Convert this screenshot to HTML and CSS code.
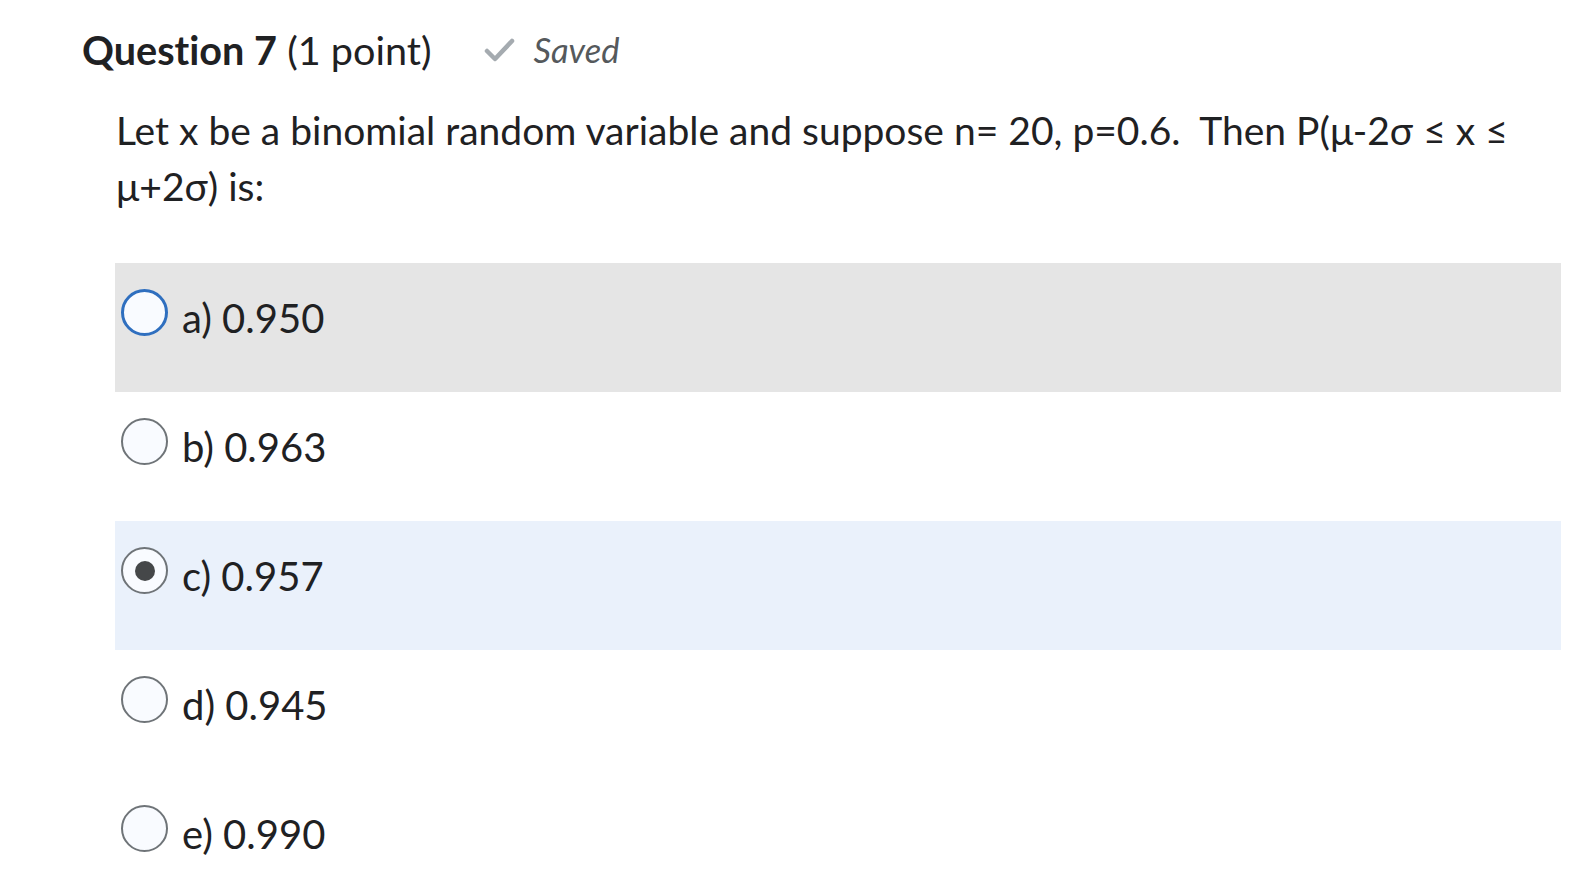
FILE: index.html
```html
<!DOCTYPE html>
<html>
<head>
<meta charset="utf-8">
<link rel="stylesheet" href="styles.css">
</head>
<body>
<div class="page">
  <div class="header">
    <h2 class="title"><span class="qnum">Question 7</span> <span class="pts">(1 point)</span></h2>
    <div class="saved">
      <svg class="check" width="32" height="26" viewBox="0 0 32 26"><path d="M3 14 L11 22 L28 4" fill="none" stroke="#a5abb0" stroke-width="4.5" stroke-linecap="round" stroke-linejoin="round"/></svg>
      <span class="saved-text">Saved</span>
    </div>
  </div>
  <p class="question">Let x be a binomial random variable and suppose n= 20, p=0.6.&nbsp; Then P(μ-2σ ≤ x ≤ μ+2σ) is:</p>
  <div class="options">
    <div class="option hover"><span class="radio focus"></span><span class="label">a) 0.950</span></div>
    <div class="option"><span class="radio"></span><span class="label">b) 0.963</span></div>
    <div class="option selected"><span class="radio checked"></span><span class="label">c) 0.957</span></div>
    <div class="option"><span class="radio"></span><span class="label">d) 0.945</span></div>
    <div class="option"><span class="radio"></span><span class="label">e) 0.990</span></div>
  </div>
</div>
</body>
</html>
```
FILE: styles.css
```css
html, body {
  margin: 0;
  padding: 0;
  background: #ffffff;
}
body {
  font-family: Lato, "Open Sans", sans-serif;
  color: #222426;
  font-variant-ligatures: no-common-ligatures;
}
.page {
  width: 1561px;
}
.header {
  display: flex;
  align-items: center;
  padding: 25px 0 0 82px;
  height: 50px;
}
.title {
  margin: 0;
  font-size: 39.6px;
  line-height: 50px;
  font-weight: normal;
  color: #1f2123;
}
.qnum {
  font-weight: bold;
}
.saved {
  display: flex;
  align-items: center;
  margin-left: 53px;
  color: #55595c;
}
.check {
  display: block;
  margin-right: 17px;
}
.saved-text {
  font-style: italic;
  font-size: 34.5px;
  line-height: 50px;
}
.question {
  margin: 27px 0 0 116px;
  font-size: 39px;
  line-height: 56px;
  color: #1f2123;
}
.options {
  margin: 49px 0 0 115px;
}
.option {
  display: flex;
  align-items: flex-start;
  height: 129px;
  box-sizing: border-box;
  padding: 26px 0 0 6px;
}
.option.hover {
  background: #e5e5e5;
}
.option.selected {
  background: #eaf1fb;
}
.radio {
  width: 47px;
  height: 47px;
  box-sizing: border-box;
  border-radius: 50%;
  border: 2px solid #6f7478;
  background: #f9fbff;
  flex: none;
  display: flex;
  align-items: center;
  justify-content: center;
}
.radio.focus {
  border: 3.5px solid #2f6fbf;
}
.radio.checked::after {
  content: "";
  width: 20px;
  height: 20px;
  border-radius: 50%;
  background: #454749;
}
.label {
  margin: 5px 0 0 14px;
  font-size: 40px;
  line-height: 48px;
  color: #1f2123;
}
```
